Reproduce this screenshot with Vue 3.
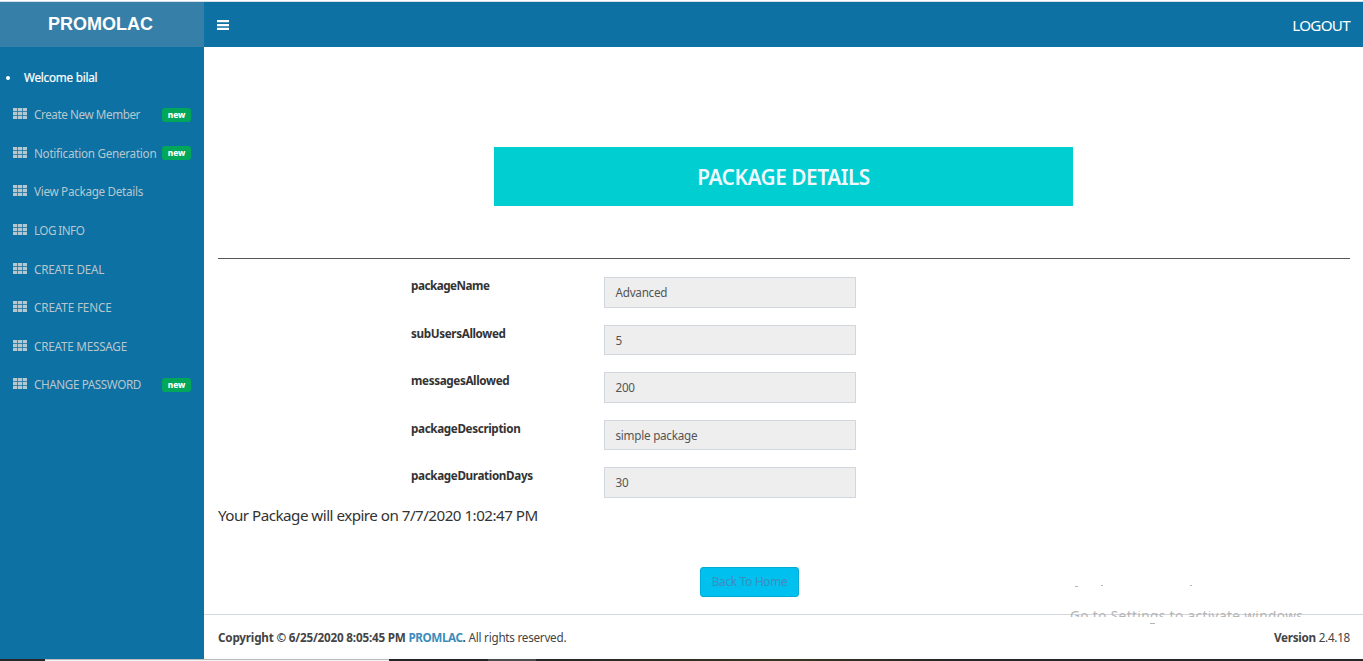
<script setup>
const menu = [
  { label: 'Create New Member', badge: true, cls: 'm1' },
  { label: 'Notification Generation', badge: true, cls: 'm2' },
  { label: 'View Package Details', cls: 'm3' },
  { label: 'LOG INFO', cls: 'm4' },
  { label: 'CREATE DEAL', cls: 'm5' },
  { label: 'CREATE FENCE', cls: 'm6' },
  { label: 'CREATE MESSAGE', cls: 'm7' },
  { label: 'CHANGE PASSWORD', badge: true, cls: 'm8' },
]
const fields = [
  { name: 'packageName', value: 'Advanced', cls: 'f1' },
  { name: 'subUsersAllowed', value: '5', cls: 'f2' },
  { name: 'messagesAllowed', value: '200', cls: 'f3' },
  { name: 'packageDescription', value: 'simple package', cls: 'f4' },
  { name: 'packageDurationDays', value: '30', cls: 'f5' },
]
</script>

<template>
  <div class="page">
    <div class="edge"></div>
    <header class="top">
      <div class="brand">PROMOLAC</div>
      <nav class="bar">
        <svg class="burger" width="12" height="10" viewBox="0 0 12 10">
          <path d="M0 0h12v2.2H0zM0 4h12v2.2H0zM0 7.8h12v2.2H0z" fill="#fff" />
        </svg>
        <a class="logout">LOGOUT</a>
      </nav>
    </header>
    <div class="body">
      <aside class="side">
        <div class="welcome"><i class="dot"></i><span>Welcome bilal</span></div>
        <ul class="menu">
          <li v-for="m in menu" :key="m.label" :class="m.cls">
            <svg class="grid" width="14" height="11" viewBox="0 0 14 11">
              <path d="M0 0h4.2v3.2H0zM4.9 0h4.2v3.2H4.9zM9.8 0H14v3.2H9.8zM0 3.9h4.2v3.2H0zM4.9 3.9h4.2v3.2H4.9zM9.8 3.9H14v3.2H9.8zM0 7.8h4.2V11H0zM4.9 7.8h4.2V11H4.9zM9.8 7.8H14V11H9.8z" />
            </svg>
            <span class="label">{{ m.label }}</span>
            <span v-if="m.badge" class="badge">new</span>
          </li>
        </ul>
      </aside>
      <main class="main">
        <section class="content">
          <h1 class="title"><span>PACKAGE DETAILS</span></h1>
          <hr class="rule" />
          <div class="form">
            <div v-for="f in fields" :key="f.name" class="row" :class="f.cls">
              <label><span>{{ f.name }}</span></label>
              <div class="input"><span>{{ f.value }}</span></div>
            </div>
          </div>
          <p class="expire"><span>Your Package will expire on 7/7/2020 1:02:47 PM</span></p>
          <button class="back">Back To Home</button>
        </section>
        <footer class="foot">
          <div><b class="copy">Copyright © 6/25/2020 8:05:45 PM <a>PROMLAC</a>.</b> <span class="rights">All rights reserved.</span></div>
          <div class="ver"><b>Version</b> 2.4.18</div>
        </footer>
        <div class="mark"><span>Go to Settings to activate windows.</span></div>
        <i class="speck s1"></i><i class="speck s2"></i><i class="speck s3"></i><i class="speck s4"></i>
      </main>
    </div>
    <div class="taskbar"><i class="t1"></i><i class="t2"></i><i class="t3"></i><i class="t4"></i><i class="t5"></i></div>
  </div>
</template>

<style>
body { margin: 0; background: #fff; overflow: hidden; }
</style>

<style scoped>
* { box-sizing: border-box; }
.page { position: relative; width: 1363px; height: 661px; display: flex; flex-direction: column; font-family: "Noto Sans", "Open Sans", sans-serif; font-size: 11.7px; color: #333; background: #fff; overflow: hidden; white-space: nowrap; }
.edge { height: 2px; background: linear-gradient(#fff 50%, #d3dfe7 50%); }
.top { display: flex; height: 45px; flex: none; }
.brand { width: 204px; background: #367fa9; color: #fff; font: bold 18px/44px "Liberation Sans", Arial, sans-serif; text-align: center; padding-right: 3px; }
.bar { flex: 1; background: #0d71a3; display: flex; justify-content: space-between; align-items: center; padding: 0 13px 0 13px; }
.burger { margin-top: 0; }
.logout { color: #fff; font-size: 15.2px; letter-spacing: -0.7px; margin-top: 1px; }
.body { display: flex; height: 612px; flex: none; }
.side { width: 204px; background: #0d71a3; color: #b8c7ce; }
.welcome { display: flex; align-items: center; height: 20px; margin-top: 20px; color: #fff; }
.welcome span { letter-spacing: -0.22px; -webkit-text-stroke: 0.2px #fff; }
.dot { width: 4px; height: 4px; border-radius: 50%; background: #fff; margin: 1px 14px 0 6px; }
.menu { list-style: none; margin: 8px 0 0; padding: 0; }
.menu li { display: flex; align-items: center; height: 38.6px; padding: 0 13px; }
.grid { fill: #b8c7ce; margin-right: 7px; flex: none; margin-top: -1px; }
.label { letter-spacing: -0.3px; }
.m1 .label { letter-spacing: -0.42px; }
.m2 .label { letter-spacing: -0.27px; }
.m4 .label { letter-spacing: -0.55px; }
.m5 .label { letter-spacing: -0.2px; }
.m6 .label { letter-spacing: -0.13px; }
.m7 .label { letter-spacing: -0.22px; }
.m8 .label { letter-spacing: -0.4px; }
.badge { margin-left: auto; width: 29px; height: 14px; margin-top: 1px; border-radius: 3px; background: #00a65a; color: #fff; font-weight: 800; font-size: 8.3px; line-height: 13px; text-align: center; }
.main { position: relative; flex: 1; display: flex; flex-direction: column; }
.content { height: 567px; padding: 100px 13px 0 14px; }
.title { width: 579px; height: 59px; margin: 0 0 0 276px; background: #00ced1; color: #f0f8ff; font-size: 20.8px; font-weight: 600; line-height: 61px; text-align: center; letter-spacing: -0.45px; }
.rule { border: 0; height: 1px; background: #555; margin: 52px 0 18px; }
.form { padding-left: 193px; }
.row { display: flex; height: 47.5px; }
.row label { width: 193px; font-weight: 700; line-height: 17px; letter-spacing: -0.37px; }
.f1 label { letter-spacing: -0.5px; }
.input { width: 252px; height: 30.6px; border: 1px solid #d2d6de; background: #eee; color: #555; padding-left: 10.5px; line-height: 29px; letter-spacing: -0.25px; }
.expire { margin: -10px 0 0; font-size: 15.2px; line-height: 20px; letter-spacing: -0.52px; }
.back { display: block; width: 99px; height: 30px; margin: 42px 0 0 482px; padding: 0 0 2px; border: 1px solid #00acd6; border-radius: 3px; background: #00c0ef; color: #3c8dbc; font: 11.7px "Noto Sans", sans-serif; letter-spacing: -0.2px; }
.foot { flex: 1; border-top: 1px solid #d2d6de; display: flex; justify-content: space-between; align-items: center; padding: 0 13px 0 14px; color: #444; }
.foot a { color: #3c8dbc; letter-spacing: -0.45px; }
.copy { letter-spacing: -0.2px; }
.rights { letter-spacing: -0.25px; }
.ver { letter-spacing: -0.28px; }
.mark { position: absolute; left: 866px; top: 564px; width: 240px; height: 6px; overflow: hidden; color: #b5b5b5; font-size: 13.6px; line-height: 18px; letter-spacing: 0.4px; }
.mark span { display: block; margin-top: -4px; }
.speck { position: absolute; height: 1px; background: #b5b5b5; }
.s1 { left: 871px; top: 539px; width: 3px; }
.s2 { left: 897px; top: 538px; width: 2px; }
.s3 { left: 986px; top: 538px; width: 2px; }
.s4 { left: 946px; top: 576px; width: 5px; }
.taskbar { display: flex; height: 2px; }
.t1 { width: 45px; background: #272727; }
.t2 { width: 344px; background: linear-gradient(#bbb 50%, #f3f3f3 50%); }
.t3 { width: 99px; background: #252525; }
.t4 { width: 48px; background: #4c4c4c; }
.t5 { flex: 1; background: linear-gradient(90deg, #262626, #353721 30%, #262626 50%); }
</style>
